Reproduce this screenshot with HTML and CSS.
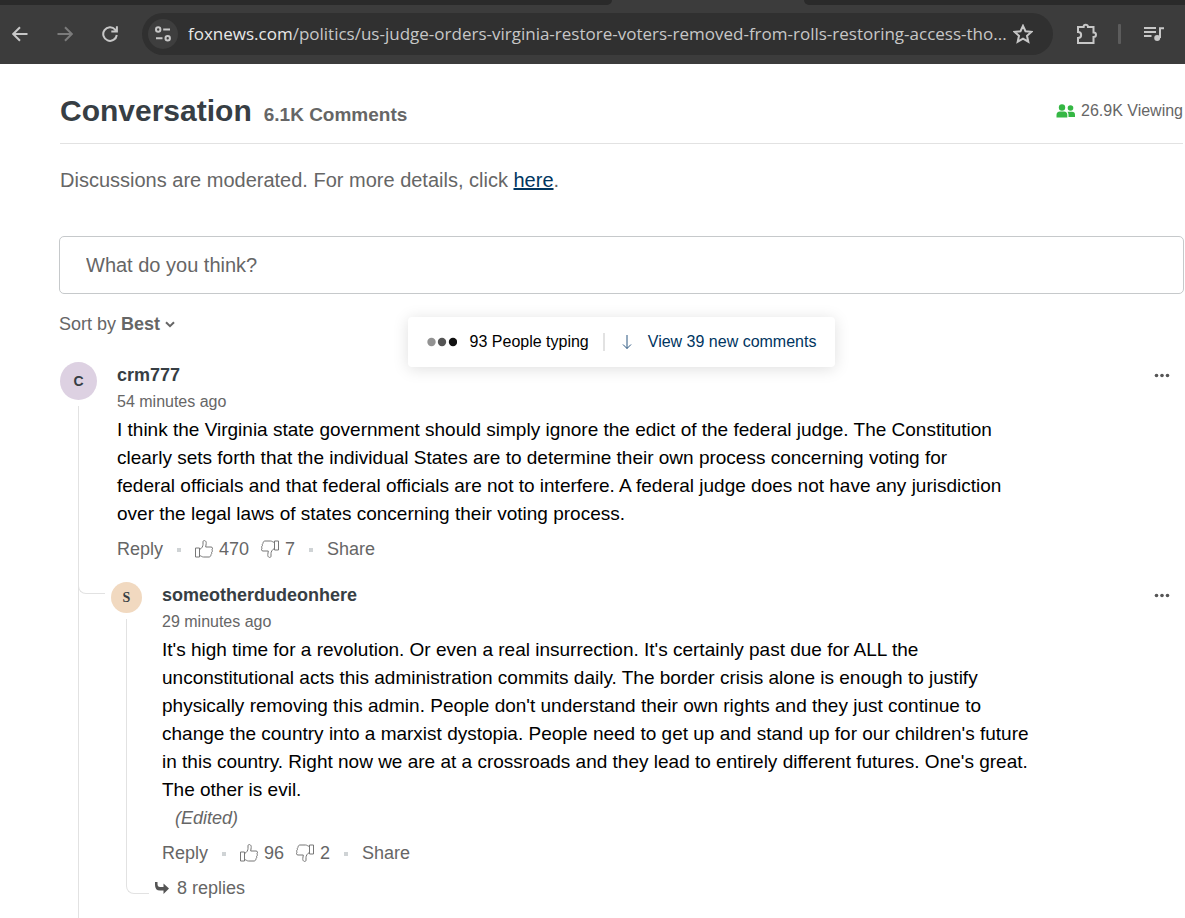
FILE: index.html
```html
<!DOCTYPE html>
<html lang="en">
<head>
<meta charset="utf-8">
<meta name="viewport" content="width=device-width, initial-scale=1">
<title>Conversation</title>
<link rel="stylesheet" href="styles.css">
</head>
<body>
<svg class="defs" width="0" height="0" aria-hidden="true">
  <symbol id="thumb" viewBox="0 0 18 18">
    <path d="M.5 8h4v9h-4zM4.500 9.500C7 8.500 8 6 8 4.500V2C8 .5 9 .5 9.600.600C11 1 11.300 2 11.200 3.500L10.700 7H16C18 7 18 9.500 16.800 9.800C17.800 10.500 17.500 12 16.500 12.300C17 13 16.800 14.300 15.800 14.700C16.200 16 15 17 14 17H8.500C7 17 6.500 16 4.500 15.500"/>
  </symbol>
  <symbol id="dots" viewBox="0 0 16 5">
    <circle cx="2.500" cy="2.500" r="1.800"/><circle cx="8" cy="2.500" r="1.800"/><circle cx="13.500" cy="2.500" r="1.800"/>
  </symbol>
</svg>

<header class="browser">
  <div class="tabs"><span class="tab"></span><span class="tab-rest"></span></div>
  <div class="toolbar">
    <nav class="nav" aria-label="Browser">
      <button aria-label="Back"><svg width="16" height="16" viewBox="0 0 16 16"><path d="M15.500 8H1.500M8 1.200L1.200 8L8 14.800"/></svg></button>
      <button class="off" aria-label="Forward" disabled><svg width="16" height="16" viewBox="0 0 16 16"><path d="M.5 8H14.500M8 1.200L14.800 8L8 14.800"/></svg></button>
      <button aria-label="Reload"><svg width="16" height="16" viewBox="0 0 16 16"><path d="M14.800 9A6.800 6.800 0 1 1 13.200 3.600L14.500 5.200M14.900.3V5.500H9.300"/></svg></button>
    </nav>
    <div class="omnibox">
      <button class="site" aria-label="Site information"><svg width="16" height="16" viewBox="0 0 16 16"><circle cx="3.200" cy="3.500" r="2.200"/><path d="M8.200 3.500H15M1 12.200H7.500"/><circle cx="12.700" cy="12.200" r="2.200"/></svg></button>
      <div class="url"><span>foxnews.com</span>/politics/us-judge-orders-virginia-restore-voters-removed-from-rolls-restoring-access-tho...</div>
      <button class="star" aria-label="Bookmark"><svg width="20" height="20" viewBox="0 0 20 20"><path d="M10 1.800L12.500 7.200L18.500 7.800L14 11.800L15.300 17.700L10 14.600L4.700 17.700L6 11.800L1.500 7.800L7.500 7.200Z"/></svg></button>
    </div>
    <button class="ext" aria-label="Extensions"><svg width="22" height="22" viewBox="0 0 22 22"><path d="M2 4H7.600C7.600 1 12 1 12 4H17.500V9.500C20.800 9.500 20.800 14 17.500 14V20H2V15C6.200 15 6.200 9 2 9Z"/></svg></button>
    <span class="bar"></span>
    <button class="media" aria-label="Media controls"><svg width="20" height="16" viewBox="0 0 20 16"><path d="M0 2H12M0 6H12M0 10H7.500M16 12V2.200H20"/><circle class="note" cx="13.200" cy="12" r="3"/></svg></button>
  </div>
</header>

<main class="page">
  <div class="heading">
    <h1>Conversation</h1>
    <span class="count">6.1K Comments</span>
    <span class="viewing"><svg width="20" height="14" viewBox="0 0 20 14"><circle cx="6" cy="3.500" r="3.200"/><circle cx="14.500" cy="4" r="2.800"/><path d="M.5 13.500V11Q.5 7.500 4 7.500H8Q11.300 7.500 11.300 11V13.500ZM12.500 13V11Q12.500 9 11.500 7.800H16Q19 7.800 19 11V13Z"/></svg>26.9K Viewing</span>
  </div>
  <p class="notice">Discussions are moderated. For more details, click <a href="#rules">here</a>.</p>
  <input class="compose" type="text" aria-label="Write a comment" placeholder="What do you think?">

  <div class="sortrow">
    <button class="sort">Sort by <b>Best</b><svg width="10" height="7" viewBox="0 0 10 7"><path d="M1 1.200L5 5.200L9 1.200"/></svg></button>
    <div class="live" role="status">
      <svg class="typing" width="30" height="10" viewBox="0 0 30 10"><circle cx="4.500" cy="5" r="4.200" fill="#929292"/><circle cx="15" cy="5" r="4.200" fill="#555"/><circle cx="26" cy="5" r="4.200" fill="#111"/></svg>
      <span>93 People typing</span>
      <span class="split"></span>
      <button class="new"><svg width="10" height="16" viewBox="0 0 10 16"><path d="M5 1V14.500M1 10.500L5 14.500L9 10.500"/></svg>View 39 new comments</button>
    </div>
  </div>

  <article class="comment">
    <div class="rail"><span class="avatar">C</span><span class="line"></span></div>
    <div class="body">
      <div class="top"><a class="name" href="#crm777">crm777</a><button class="more" aria-label="More options"><svg width="16" height="5"><use href="#dots"/></svg></button></div>
      <time>54 minutes ago</time>
      <p class="text">I think the Virginia state government should simply ignore the edict of the federal judge. The Constitution clearly sets forth that the individual States are to determine their own process concerning voting for federal officials and that federal officials are not to interfere. A federal judge does not have any jurisdiction over the legal laws of states concerning their voting process.</p>
      <div class="actions">
        <button>Reply</button><i class="sep"></i>
        <button class="vote"><svg width="18" height="18"><use href="#thumb"/></svg>470</button>
        <button class="vote down"><svg width="18" height="18"><use href="#thumb"/></svg>7</button>
        <i class="sep"></i><button>Share</button>
      </div>

      <article class="comment reply">
        <div class="rail"><span class="avatar">S</span><span class="line"></span></div>
        <div class="body">
          <div class="top"><a class="name" href="#someotherdudeonhere">someotherdudeonhere</a><button class="more" aria-label="More options"><svg width="16" height="5"><use href="#dots"/></svg></button></div>
          <time>29 minutes ago</time>
          <p class="text">It's high time for a revolution. Or even a real insurrection. It's certainly past due for ALL the unconstitutional acts this administration commits daily. The border crisis alone is enough to justify physically removing this admin. People don't understand their own rights and they just continue to change the country into a marxist dystopia. People need to get up and stand up for our children's future in this country. Right now we are at a crossroads and they lead to entirely different futures. One's great. The other is evil.</p>
          <div class="edited">(Edited)</div>
          <div class="actions">
            <button>Reply</button><i class="sep"></i>
            <button class="vote"><svg width="18" height="18"><use href="#thumb"/></svg>96</button>
            <button class="vote down"><svg width="18" height="18"><use href="#thumb"/></svg>2</button>
            <i class="sep"></i><button>Share</button>
          </div>
          <button class="replies"><svg width="14" height="12" viewBox="0 0 14 12"><path d="M0 0H2.500V2Q2.500 5 5 5H8.500V1.500L14 6.500L8.500 12V8.500H5Q0 8.500 0 3Z"/></svg>8 replies</button>
        </div>
      </article>
    </div>
  </article>
</main>
</body>
</html>
```
FILE: styles.css
```css
* { box-sizing: border-box; }
body {
  margin: 0;
  min-height: 100vh;
  display: flex;
  flex-direction: column;
  background: #fff;
  color: #000;
  font: 18px/28px "Liberation Sans", Arial, sans-serif;
}
button {
  padding: 0;
  border: 0;
  background: none;
  color: inherit;
  font: inherit;
}
svg { flex: none; display: block; }
.defs { position: absolute; }
h1, p { margin: 0; }

/* Browser chrome */
.browser { background: #3c3c3c; }
.tabs { display: flex; height: 5px; background: #3c3c3c; }
.tab { flex: 0 0 612px; background: #2a2a2a; border-bottom-right-radius: 5px; }
.tab-rest { flex: 1; margin-left: 192px; background: #2a2a2a; border-bottom-left-radius: 5px; }
.toolbar {
  display: flex;
  align-items: center;
  height: 59px;
  padding: 0 21px 1px 12px;
}
.toolbar svg { fill: none; stroke: #c7c7c7; stroke-width: 2; }
.nav { display: flex; gap: 29px; }
.nav .off svg { stroke: #7b7b7b; }
.omnibox {
  flex: 1;
  min-width: 0;
  display: flex;
  align-items: center;
  height: 42px;
  margin-left: 24px;
  padding: 0 20px 0 6px;
  border-radius: 21px;
  background: #303030;
}
.site {
  display: grid;
  place-items: center;
  flex: none;
  width: 30px;
  height: 30px;
  border-radius: 50%;
  background: #3e3e3e;
}
.url {
  flex: 1;
  min-width: 0;
  margin-left: 10px;
  overflow: hidden;
  white-space: nowrap;
  color: #c7c7c7;
  font: 17px/28px "Open Sans", "Noto Sans", sans-serif;
}
.url span { color: #e8e8e8; }
.ext { margin-left: 23px; }
.bar { width: 3px; height: 20px; margin: 0 23px 0 20px; border-radius: 1px; background: #5c5c5c; }
.media svg .note { fill: #c7c7c7; stroke: none; }

/* Discussion */
.page {
  flex: 1;
  display: flex;
  flex-direction: column;
  padding: 28px 1px 0 59px;
  color: #666;
}
.heading {
  display: flex;
  align-items: baseline;
  gap: 12px;
  padding-bottom: 14px;
  margin: 0 1px;
  border-bottom: 1px solid #e2e2e2;
}
h1 { color: #373e44; font-size: 30px; line-height: 37px; }
.count { font-size: 19px; font-weight: bold; }
.viewing { display: flex; align-items: center; align-self: center; gap: 5px; margin-left: auto; font-size: 16px; }
.viewing svg { fill: #35b744; }
.notice { margin: 22px 1px 42px; font-size: 20px; }
.notice a { color: #00355f; }
.compose {
  width: 100%;
  height: 58px;
  padding: 0 26px;
  border: 1px solid #c6c9cb;
  border-radius: 5px;
  background: #fff;
  font: 20px/28px "Liberation Sans", Arial, sans-serif;
}
.compose::placeholder { color: #666; opacity: 1; }
.sortrow { position: relative; margin-top: 16px; }
.sort { display: flex; align-items: center; white-space: pre; }
.sort svg { margin-left: 5px; fill: none; stroke: #666; stroke-width: 2; }
.live {
  position: absolute;
  top: 7px;
  right: 0;
  left: 0;
  display: flex;
  align-items: center;
  width: max-content;
  height: 50px;
  margin: 0 auto;
  padding: 0 19px;
  border-radius: 4px;
  background: #fff;
  box-shadow: 0 2px 16px rgba(0, 0, 0, .13);
  color: #000;
  font-size: 16px;
}
.typing { margin-right: 13px; }
.split { width: 2px; height: 18px; margin: 0 17px 0 14px; background: #e2e2e2; }
.new { display: flex; align-items: center; gap: 16px; color: #00355f; }
.new svg { fill: none; stroke: #2a5680; }

.comment {
  flex: 1;
  display: flex;
  gap: 20px;
  margin: 24px 0 0 1px;
}
.rail { display: flex; flex-direction: column; align-items: center; gap: 6px; flex: 0 0 37px; }
.avatar {
  display: grid;
  place-items: center;
  width: 37px;
  height: 38px;
  border-radius: 50%;
  background: #ddd1e2;
  color: #373e44;
  font-size: 14px;
  font-weight: bold;
}
.line { flex: 1; width: 1px; background: #e2e2e2; }
.body { flex: 1; min-width: 0; }
.top { display: flex; align-items: center; justify-content: space-between; padding-right: 14px; }
.name { color: #373e44; font-weight: bold; line-height: 26px; text-decoration: none; }
.more svg { fill: #555; }
time { display: block; font-size: 16px; line-height: 28px; }
.text { max-width: 888px; color: #000; font-size: 19px; }
.actions { display: flex; align-items: center; margin-top: 7px; }
.sep { width: 4px; height: 4px; margin: 2px 14px 0; background: #cfd3d5; }
.vote { display: flex; align-items: center; gap: 6px; }
.vote svg { fill: none; stroke: #777; stroke-width: 1; }
.down { margin-left: 12px; }
.down svg { transform: rotate(180deg); }

.reply { position: relative; margin: 19px 0 0 -6px; }
.reply::before {
  content: "";
  position: absolute;
  top: 0;
  left: -33px;
  width: 26px;
  height: 11px;
  border: solid #e2e2e2;
  border-width: 0 0 1px 1px;
  border-bottom-left-radius: 8px;
}
.reply .rail { flex-basis: 31px; }
.reply .avatar { width: 31px; height: 31px; background: #f1d9c0; font-family: "Liberation Serif", serif; }
.reply .line {
  align-self: flex-end;
  width: 23px;
  margin: 0 -7px 8px 0;
  border: solid #e2e2e2;
  border-width: 0 0 1px 1px;
  border-bottom-left-radius: 8px;
  background: none;
}
.reply .text { max-width: 876px; }
.edited { padding-left: 13px; font-style: italic; }
.replies { display: flex; align-items: center; gap: 8px; margin: 7px 0 0 -7px; }
.replies svg { fill: #555; }
```
